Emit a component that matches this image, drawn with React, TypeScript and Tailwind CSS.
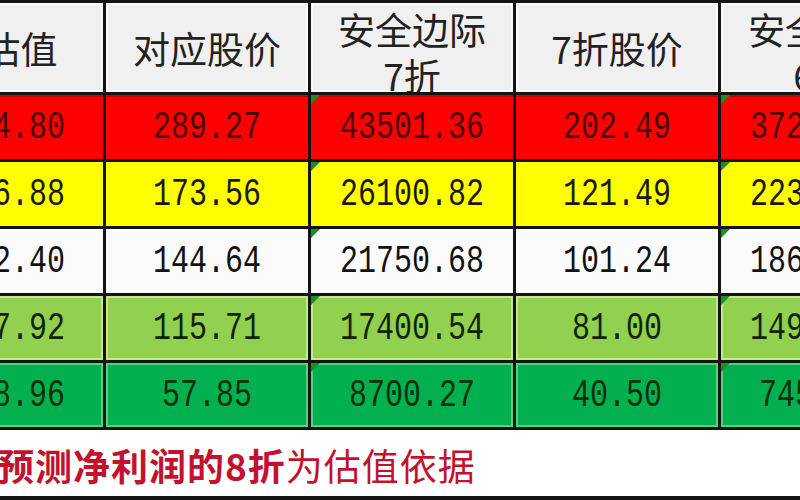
import React from "react";

type Row = {
  bg: string;
  ink: string;
  values: string[];
};

// 表头：第一列只露出半截
const headers: string[][] = [
  ["总估值"],
  ["对应股价"],
  ["安全边际", "7折"],
  ["7折股价"],
  ["安全边际", "6折"],
];

const rows: Row[] = [
  {
    bg: "bg-[#fe0000] shadow-[inset_0_2px_0_0_#c80000]",
    ink: "text-[#4a0000]",
    values: ["5444.80", "289.27", "43501.36", "202.49", "37286.88"],
  },
  {
    bg: "bg-[#ffff00]",
    ink: "text-[#1a1a00]",
    values: ["3266.88", "173.56", "26100.82", "121.49", "22372.13"],
  },
  {
    bg: "bg-[#fbfbfb]",
    ink: "text-[#111111]",
    values: ["2722.40", "144.64", "21750.68", "101.24", "18643.44"],
  },
  {
    bg: "bg-[#92d050] shadow-[inset_0_0_0_2px_#c2ea8a]",
    ink: "text-[#102400]",
    values: ["2177.92", "115.71", "17400.54", "81.00", "14914.75"],
  },
  {
    bg: "bg-[#03b04f] shadow-[inset_0_0_0_2px_#52d47e]",
    ink: "text-[#05300f]",
    values: ["1088.96", "57.85", "8700.27", "40.50", "7457.38"],
  },
];

function Marker() {
  return (
    <svg className="absolute left-0 top-0" width="9" height="9" viewBox="0 0 9 9">
      <polygon points="0,0 9,0 0,9" fill="#1e8c2c" />
    </svg>
  );
}

export default function App() {
  return (
    <div className="w-[800px] h-[500px] overflow-hidden bg-white font-['Noto_Sans_CJK_SC',sans-serif]">
      {/* 表格：网格线用背景色 + gap */}
      <div className="ml-[-99px] w-[1022px] bg-[#141414] pt-[3px] pb-[3px] grid grid-cols-[202px_202px_202px_202px_202px] grid-rows-[89px_64px_64px_64px_64px_64px] gap-[3px]">
        {headers.map((lines, i) => (
          <div
            key={i}
            className="bg-[#f0f0f0] shadow-[inset_0_0_0_2px_#fafafa] flex items-center justify-center overflow-hidden text-[#222222] text-[37px]"
          >
            {lines.length > 1 ? (
              <div className="flex flex-col items-center leading-[46px] mt-2">
                {lines.map((l) => (
                  <span key={l}>{l}</span>
                ))}
              </div>
            ) : (
              <span className="leading-[46px]">{lines[0]}</span>
            )}
          </div>
        ))}

        {rows.map((row, r) =>
          row.values.map((v, c) => (
            <div
              key={r + "-" + c}
              className={"relative flex items-center justify-center " + row.bg}
            >
              {(c === 2 || c === 4) && <Marker />}
              <span
                className={
                  "inline-block scale-y-[1.3] font-['Liberation_Mono',monospace] text-[30px] leading-none mt-[2px] " +
                  row.ink
                }
              >
                {v}
              </span>
            </div>
          ))
        )}
      </div>

      {/* 底部说明 */}
      <div className="h-[70px] border-b-4 border-[#141414] flex items-center">
        <p className="ml-[-3px] mt-[4px] whitespace-nowrap text-[37px] tracking-[1px] leading-none text-[#c3122d]">
          <span className="font-bold">预测净利润的8折</span>
          <span>为估值依据</span>
        </p>
      </div>
    </div>
  );
}
